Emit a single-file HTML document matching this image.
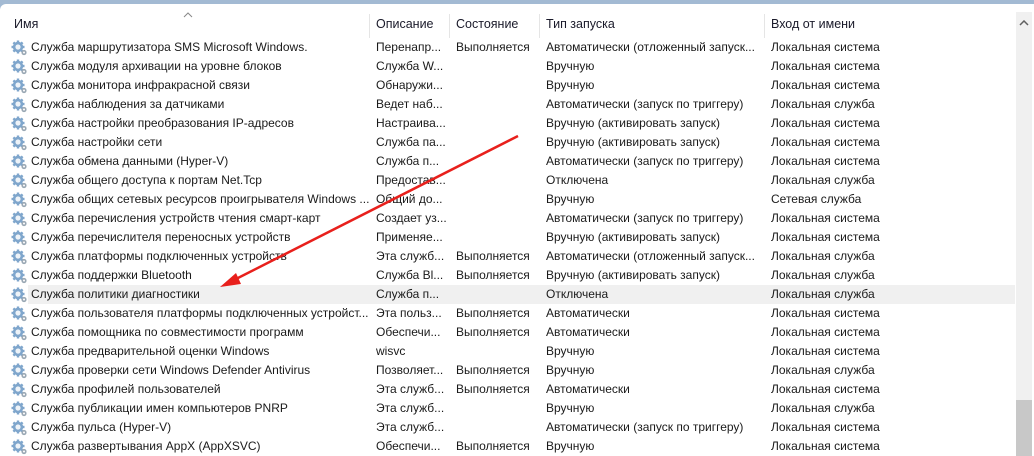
<!DOCTYPE html><html><head><meta charset="utf-8"><style>
body{margin:0;width:1034px;height:456px;overflow:hidden;background:#a3bad3;font-family:"Liberation Sans",sans-serif;font-size:12px;color:#1a1a1a}
#w{position:absolute;left:0;top:4px;width:1034px;height:452px;background:#fff;border-top-left-radius:6px}
.h{position:absolute;top:17px;font-size:12.5px;color:#1a1a2a}
.sep{position:absolute;width:1px;height:24px;background:#e5e5e5}
.r{position:absolute;left:0;width:1015px;height:19px;line-height:19px;white-space:nowrap}
.r span{position:absolute;top:0}
.c1{left:31px}.c2{left:376px}.c3{left:456px}.c4{left:546px}.c5{left:771px}
.ic{position:absolute;left:11px;top:2px}
#sb{position:absolute;left:1016px;top:12px;width:16px;height:444px;background:#f0f0f0}
#th{position:absolute;left:1016px;top:400px;width:16px;height:56px;background:#c8c8c8}
</style></head><body><div id="w"></div>
<svg style="position:absolute;left:183px;top:12px" width="10" height="6"><path d="M1 5L5 1L9 5" fill="none" stroke="#888" stroke-width="1"/></svg>
<div class="h" style="left:14px">Имя</div>
<div class="sep" style="left:369px;top:14px"></div><div class="h" style="left:376px">Описание</div>
<div class="sep" style="left:449px;top:14px"></div><div class="h" style="left:456px">Состояние</div>
<div class="sep" style="left:539px;top:14px"></div><div class="h" style="left:546px">Тип запуска</div>
<div class="sep" style="left:764px;top:14px"></div><div class="h" style="left:771px">Вход от имени</div>
<div id="sb"></div><div id="th"></div>
<svg style="position:absolute;left:1019px;top:20px" width="10" height="6"><path d="M1 5L5 1L9 5" fill="none" stroke="#606060" stroke-width="1.5"/></svg>
<div id="rows"></div>
<svg style="position:absolute;left:0;top:0" width="1034" height="456"><line x1="518" y1="136" x2="232" y2="281" stroke="#e8201c" stroke-width="2.5"/><path d="M220 287L236 273L241 284Z" fill="#e8201c"/></svg>
<script>
var d=[["Служба маршрутизатора SMS Microsoft Windows.","Перенапр...","Выполняется","Автоматически (отложенный запуск...","Локальная система"],
["Служба модуля архивации на уровне блоков","Служба W...","","Вручную","Локальная система"],
["Служба монитора инфракрасной связи","Обнаружи...","","Вручную","Локальная система"],
["Служба наблюдения за датчиками","Ведет наб...","","Автоматически (запуск по триггеру)","Локальная служба"],
["Служба настройки преобразования IP-адресов","Настраива...","","Вручную (активировать запуск)","Локальная система"],
["Служба настройки сети","Служба па...","","Вручную (активировать запуск)","Локальная система"],
["Служба обмена данными (Hyper-V)","Служба п...","","Автоматически (запуск по триггеру)","Локальная система"],
["Служба общего доступа к портам Net.Tcp","Предостав...","","Отключена","Локальная служба"],
["Служба общих сетевых ресурсов проигрывателя Windows ...","Общий до...","","Вручную","Сетевая служба"],
["Служба перечисления устройств чтения смарт-карт","Создает уз...","","Автоматически (запуск по триггеру)","Локальная система"],
["Служба перечислителя переносных устройств","Применяе...","","Вручную (активировать запуск)","Локальная система"],
["Служба платформы подключенных устройств","Эта служб...","Выполняется","Автоматически (отложенный запуск...","Локальная служба"],
["Служба поддержки Bluetooth","Служба Bl...","Выполняется","Вручную (активировать запуск)","Локальная служба"],
["Служба политики диагностики","Служба п...","","Отключена","Локальная служба"],
["Служба пользователя платформы подключенных устройст...","Эта польз...","Выполняется","Автоматически","Локальная система"],
["Служба помощника по совместимости программ","Обеспечи...","Выполняется","Автоматически","Локальная система"],
["Служба предварительной оценки Windows","wisvc","","Вручную","Локальная система"],
["Служба проверки сети Windows Defender Antivirus","Позволяет...","Выполняется","Вручную","Локальная служба"],
["Служба профилей пользователей","Эта служб...","Выполняется","Автоматически","Локальная система"],
["Служба публикации имен компьютеров PNRP","Эта служб...","","Вручную","Локальная служба"],
["Служба пульса (Hyper-V)","Эта служб...","","Автоматически (запуск по триггеру)","Локальная система"],
["Служба развертывания AppX (AppXSVC)","Обеспечи...","Выполняется","Вручную","Локальная система"]];
var g='<svg class="ic" width="17" height="16" viewBox="0 0 17 16"><g fill="#7fa6cc"><circle cx="7" cy="7" r="5.2"/><g stroke="#7fa6cc" stroke-width="2.4"><line x1="7" y1="0.5" x2="7" y2="13.5"/><line x1="0.5" y1="7" x2="13.5" y2="7"/><line x1="2.4" y1="2.4" x2="11.6" y2="11.6"/><line x1="11.6" y1="2.4" x2="2.4" y2="11.6"/></g></g><circle cx="7" cy="7" r="2.6" fill="#eef3f8"/><circle cx="13" cy="12.5" r="2.6" fill="#9aa8b4"/><circle cx="13" cy="12.5" r="1" fill="#fff"/></svg>';
var h='';d.forEach(function(r,i){var y=38+i*19;h+='<div class="r" style="top:'+y+'px;'+(i==13?'background:#f0f0f0;left:28px;width:987px':'')+'">'+(i==13?g.replace('class="ic"','class="ic" style="left:-17px"'):g)+r.map(function(t,j){return '<span class="c'+(j+1)+'"'+(i==13?' style="margin-left:-28px"':'')+'>'+t+'</span>'}).join('')+'</div>'});
document.getElementById('rows').innerHTML=h;
</script></body></html>
